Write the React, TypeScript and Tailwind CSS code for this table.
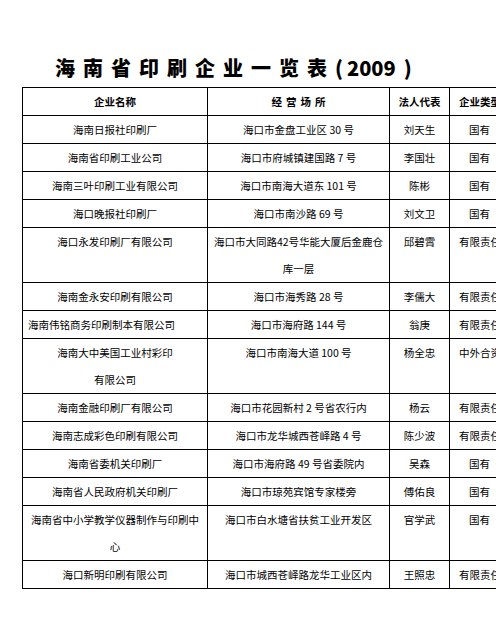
const rows: { name: string; addr: string; rep: string; type: string; nameClass?: string }[] = [
  { name: '海南日报社印刷厂', addr: '海口市金盘工业区 30 号', rep: '刘天生', type: '国有' },
  { name: '海南省印刷工业公司', addr: '海口市府城镇建国路 7 号', rep: '李国壮', type: '国有' },
  { name: '海南三叶印刷工业有限公司', addr: '海口市南海大道东 101 号', rep: '陈彬', type: '国有' },
  { name: '海口晚报社印刷厂', addr: '海口市南沙路 69 号', rep: '刘文卫', type: '国有' },
  { name: '海口永发印刷厂有限公司', addr: '海口市大同路42号华能大厦后金鹿仓库一层', rep: '邱碧霄', type: '有限责任公司' },
  { name: '海南金永安印刷有限公司', addr: '海口市海秀路 28 号', rep: '李儒大', type: '有限责任公司' },
  { name: '海南伟铭商务印刷制本有限公司', addr: '海口市海府路 144 号', rep: '翁庚', type: '有限责任公司', nameClass: 'text-left pl-[5px]' },
  { name: '海南大中美国工业村彩印\n有限公司', addr: '海口市南海大道 100 号', rep: '杨全忠', type: '中外合资' },
  { name: '海南金融印刷厂有限公司', addr: '海口市花园新村 2 号省农行内', rep: '杨云', type: '有限责任公司' },
  { name: '海南志成彩色印刷有限公司', addr: '海口市龙华城西苍峄路 4 号', rep: '陈少波', type: '有限责任公司' },
  { name: '海南省委机关印刷厂', addr: '海口市海府路 49 号省委院内', rep: '吴森', type: '国有' },
  { name: '海南省人民政府机关印刷厂', addr: '海口市琼苑宾馆专家楼旁', rep: '傅佑良', type: '国有' },
  { name: '海南省中小学教学仪器制作与印刷中心', addr: '海口市白水塘省扶贫工业开发区', rep: '官学武', type: '国有' },
  { name: '海口新明印刷有限公司', addr: '海口市城西苍峄路龙华工业区内', rep: '王照忠', type: '有限责任公司' },
]

const cell = 'border border-black align-top text-center leading-[27px] py-0'

export default function App() {
  return (
    <div
      className="w-[496px] h-[620px] overflow-hidden bg-white text-black"
      style={{ fontFamily: '"Noto Sans CJK SC", "Noto Sans", sans-serif' }}
    >
      <h1 className="pt-[55px] pl-[55px] h-[87px] text-[20px] font-black leading-[26px] whitespace-nowrap">
        <span className="tracking-[8px]">海南省印刷企业一览表</span>
        <span>(</span>
        <span className="ml-[4px]">2009</span>
        <span className="ml-[8px]">)</span>
      </h1>
      <table className="ml-[22px] w-[487px] table-fixed border-collapse text-[10.5px]">
        <colgroup>
          <col className="w-[185px]" />
          <col className="w-[182px]" />
          <col className="w-[60px]" />
          <col className="w-[60px]" />
        </colgroup>
        <thead>
          <tr className="font-bold">
            <th className={`${cell} px-[6px]`}>企业名称</th>
            <th className={`${cell} px-[2px]`}>
              <span className="tracking-[4px] -mr-[4px]">经营场所</span>
            </th>
            <th className={`${cell} px-[2px]`}>法人代表</th>
            <th className={`${cell} px-[9px] whitespace-nowrap overflow-hidden`}>企业类型</th>
          </tr>
        </thead>
        <tbody>
          {rows.map((r) => (
            <tr key={r.name}>
              <td className={`${cell} px-[6px] whitespace-pre-line ${r.nameClass ?? ''}`}>{r.name}</td>
              <td className={`${cell} px-[2px]`}>{r.addr}</td>
              <td className={`${cell} px-[2px]`}>{r.rep}</td>
              <td className={`${cell} px-[9px] whitespace-nowrap overflow-hidden`}>{r.type}</td>
            </tr>
          ))}
        </tbody>
      </table>
    </div>
  )
}
